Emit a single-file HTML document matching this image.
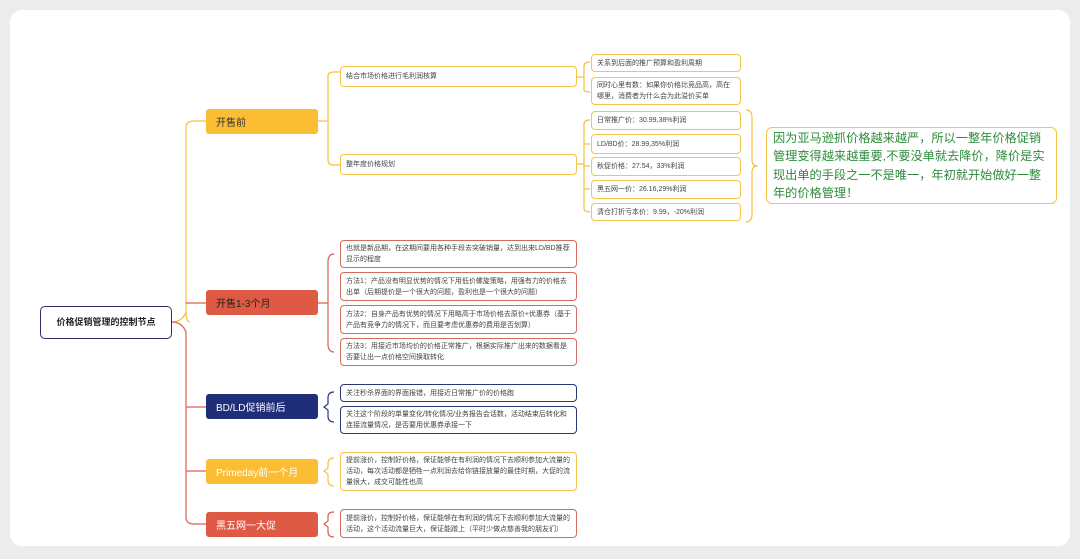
<!DOCTYPE html>
<html><head><meta charset="utf-8"><style>
*{margin:0;padding:0;box-sizing:border-box}
body{width:1080px;height:559px;background:#ececec;position:relative;overflow:hidden;font-family:"Liberation Sans","Noto Sans CJK SC",sans-serif}
.card{position:absolute;left:10px;top:10px;width:1060px;height:536px;background:#fff;border-radius:12px}
.b{position:absolute;border:1.3px solid;border-radius:4px;font-size:7px;line-height:11px;color:#444;padding:0 5px;display:flex;align-items:center;background:#fff}
.y{border-color:#f5c54a}.r{border-color:#d66a5e}.n{border-color:#2a3675}
.l1{position:absolute;left:206px;width:112px;height:25px;border-radius:3px;font-size:10px;display:flex;align-items:center;padding-left:10px;color:#fff}
</style></head><body>
<div class="card"></div>
<svg style="position:absolute;left:0;top:0" width="1080" height="559" fill="none" stroke-width="1.2">
<path d="M172 322 Q182 322 186 312 L186 128 Q186 121 194 121 L206 121" stroke="#f5c040"/>
<path d="M186 312 Q186 322 190 322" stroke="#f5c040"/>
<path d="M172 322 Q182 322 186 332 L186 517 Q186 524 194 524 L206 524" stroke="#d8604e"/>
<path d="M186 303 L206 303 M186 407 L206 407 M186 471 L206 471" stroke="#d8604e"/>
<path d="M328 76 Q328 72 334 72 L340 72 M328 76 L328 160 Q328 165 334 165 L340 165 M318 121 L328 121" stroke="#f5c040"/>
<path d="M577 77 L584 77 M584 66 L584 90 M584 66 Q584 62 590 62 M584 90 Q584 92 590 92" stroke="#f5c040"/>
<path d="M577 164 L584 164 M584 124 L584 208 M584 124 Q584 120 590 120 M584 208 Q584 212 590 212 M584 144 L590 144 M584 166 L590 166 M584 189 L590 189" stroke="#f5c040"/>
<path d="M746 110 Q752 110 752 118 L752 160 Q752 166 758 166 Q752 166 752 172 L752 214 Q752 222 746 222" stroke="#f5c040"/>
<path d="M334 254 Q328 254 328 262 L328 344 Q328 352 334 352 M318 303 L328 303" stroke="#d8604e"/>
<path d="M334 392 Q328 392 328 398 L328 404 L324 407 L328 410 L328 416 Q328 422 334 422" stroke="#2a3675"/>
<path d="M334 458 Q328 458 328 464 L328 468 L324 471 L328 474 L328 480 Q328 486 334 486" stroke="#f5c040"/>
<path d="M334 512 Q328 512 328 516 L328 521 L324 524 L328 527 L328 532 Q328 537 334 537" stroke="#d8604e"/>
</svg>
<div class="b" style="left:40px;top:306px;width:132px;height:33px;border:1.8px solid #2a2f66;border-radius:5px;font-size:9px;font-weight:bold;color:#222;justify-content:center">价格促销管理的控制节点</div>
<div class="l1" style="top:109px;background:#fbbd33;color:#333">开售前</div>
<div class="l1" style="top:290px;background:#df5a44;color:#222">开售1-3个月</div>
<div class="l1" style="top:394px;background:#1f2e78">BD/LD促销前后</div>
<div class="l1" style="top:459px;background:#fbbd33">Primeday前一个月</div>
<div class="l1" style="top:512px;background:#df5a44">黑五网一大促</div>

<div class="b y" style="left:340px;top:66px;width:237px;height:21px">结合市场价格进行毛利润核算</div>
<div class="b y" style="left:340px;top:154px;width:237px;height:21px">整年度价格规划</div>
<div class="b y" style="left:591px;top:54px;width:150px;height:18px">关系到后面的推广预算和盈利周期</div>
<div class="b y" style="left:591px;top:77px;width:150px;height:28px">同时心里有数：如果你价格比竞品高，高在哪里，消费者为什么会为此溢价买单</div>
<div class="b y" style="left:591px;top:111px;width:150px;height:19px">日常推广价：30.99,38%利润</div>
<div class="b y" style="left:591px;top:134px;width:150px;height:20px">LD/BD价：28.99,35%利润</div>
<div class="b y" style="left:591px;top:157px;width:150px;height:19px">秋促价格：27.54，33%利润</div>
<div class="b y" style="left:591px;top:180px;width:150px;height:19px">黑五网一价：26.16,29%利润</div>
<div class="b y" style="left:591px;top:203px;width:150px;height:18px">清仓打折亏本价：9.99，-20%利润</div>
<div class="b y" style="left:766px;top:127px;width:291px;height:77px;font-size:12.2px;line-height:18.5px;color:#2f8a3c;padding:0 6px;border-radius:6px">因为亚马逊抓价格越来越严，所以一整年价格促销管理变得越来越重要,不要没单就去降价，降价是实现出单的手段之一不是唯一，年初就开始做好一整年的价格管理！</div>

<div class="b r" style="left:340px;top:240px;width:237px;height:28px">也就是新品期，在这期间要用各种手段去突破销量，达到出来LD/BD推荐显示的程度</div>
<div class="b r" style="left:340px;top:272px;width:237px;height:29px">方法1：产品没有明显优势的情况下用低价螺旋策略，用强有力的价格去出单（后期提价是一个很大的问题，盈利也是一个很大的问题）</div>
<div class="b r" style="left:340px;top:305px;width:237px;height:29px">方法2：自身产品有优势的情况下用略高于市场价格去原价+优惠券（基于产品有竞争力的情况下，而且要考虑优惠券的费用是否划算）</div>
<div class="b r" style="left:340px;top:338px;width:237px;height:28px">方法3：用接近市场均价的价格正常推广，根据实际推广出来的数据看是否要让出一点价格空间换取转化</div>
<div class="b n" style="left:340px;top:384px;width:237px;height:18px">关注秒杀界面的界面报错，用接近日常推广价的价格跑</div>
<div class="b n" style="left:340px;top:406px;width:237px;height:28px">关注这个阶段的单量变化/转化情况/业务报告会话数，活动结束后转化和连接流量情况，是否要用优惠券承接一下</div>
<div class="b y" style="left:340px;top:452px;width:237px;height:39px">提前涨价，控制好价格，保证能够在有利润的情况下去顺利参加大流量的活动，每次活动都是牺牲一点利润去给你链接放量的最佳时期，大促的流量很大，成交可能性也高</div>
<div class="b r" style="left:340px;top:509px;width:237px;height:29px">提前涨价，控制好价格，保证能够在有利润的情况下去顺利参加大流量的活动，这个活动流量巨大，保证能蹭上（平时少做点慈善我的朋友们）</div>
</body></html>
